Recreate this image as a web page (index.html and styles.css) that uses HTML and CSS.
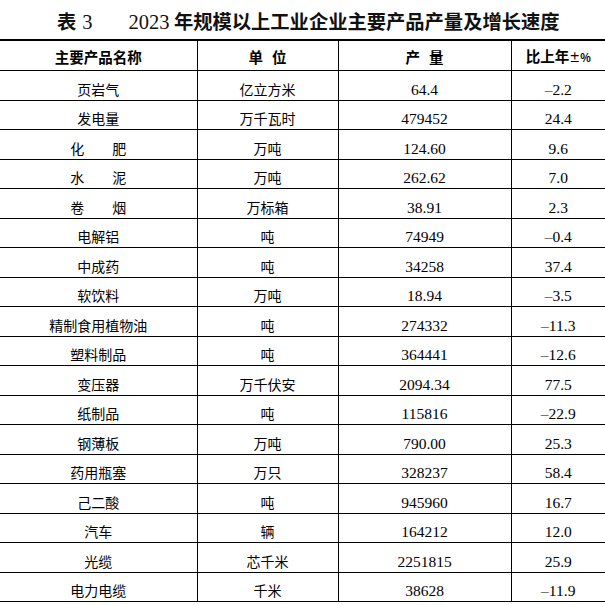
FILE: index.html
```html
<!DOCTYPE html>
<html lang="zh-CN">
<head>
<meta charset="utf-8">
<title>表 3 2023 年规模以上工业企业主要产品产量及增长速度</title>
<link rel="stylesheet" href="styles.css">
</head>
<body>
<h1 class="title"><span class="cn">表</span><span class="sp"></span><span class="num">3</span><span class="gap"></span><span class="num">2023</span> <span class="cn">年规模以上工业企业主要产品产量及增长速度</span></h1>
<table class="data">
  <colgroup>
    <col class="c1"><col class="c2"><col class="c3"><col class="c4">
  </colgroup>
  <thead>
    <tr><th>主要产品名称</th><th>单<span class="hsp"></span>位</th><th>产<span class="hsp"></span>量</th><th>比上年<span class="pm">±%</span></th></tr>
  </thead>
  <tbody>
    <tr><td>页岩气</td><td>亿立方米</td><td class="n">64.4</td><td class="n">–2.2</td></tr>
    <tr><td>发电量</td><td>万千瓦时</td><td class="n">479452</td><td class="n">24.4</td></tr>
    <tr><td>化　　肥</td><td>万吨</td><td class="n">124.60</td><td class="n">9.6</td></tr>
    <tr><td>水　　泥</td><td>万吨</td><td class="n">262.62</td><td class="n">7.0</td></tr>
    <tr><td>卷　　烟</td><td>万标箱</td><td class="n">38.91</td><td class="n">2.3</td></tr>
    <tr><td>电解铝</td><td>吨</td><td class="n">74949</td><td class="n">–0.4</td></tr>
    <tr><td>中成药</td><td>吨</td><td class="n">34258</td><td class="n">37.4</td></tr>
    <tr><td>软饮料</td><td>万吨</td><td class="n">18.94</td><td class="n">–3.5</td></tr>
    <tr><td>精制食用植物油</td><td>吨</td><td class="n">274332</td><td class="n">–11.3</td></tr>
    <tr><td>塑料制品</td><td>吨</td><td class="n">364441</td><td class="n">–12.6</td></tr>
    <tr><td>变压器</td><td>万千伏安</td><td class="n">2094.34</td><td class="n">77.5</td></tr>
    <tr><td>纸制品</td><td>吨</td><td class="n">115816</td><td class="n">–22.9</td></tr>
    <tr><td>钢薄板</td><td>万吨</td><td class="n">790.00</td><td class="n">25.3</td></tr>
    <tr><td>药用瓶塞</td><td>万只</td><td class="n">328237</td><td class="n">58.4</td></tr>
    <tr><td>己二酸</td><td>吨</td><td class="n">945960</td><td class="n">16.7</td></tr>
    <tr><td>汽车</td><td>辆</td><td class="n">164212</td><td class="n">12.0</td></tr>
    <tr><td>光缆</td><td>芯千米</td><td class="n">2251815</td><td class="n">25.9</td></tr>
    <tr><td>电力电缆</td><td>千米</td><td class="n">38628</td><td class="n">–11.9</td></tr>
  </tbody>
</table>
</body>
</html>
```

FILE: styles.css
```css
html, body {
  margin: 0;
  padding: 0;
  background: #fff;
  color: #000;
}

body {
  width: 605px;
  overflow: hidden;
  font-family: "Noto Sans CJK SC", sans-serif;
}

.title {
  margin: 0;
  height: 39px;
  box-sizing: border-box;
  padding: 9px 0 0 57px;
  font-size: 19.3px;
  line-height: 24px;
  font-weight: 700;
  white-space: nowrap;
  color: #111;
}

.title .cn {
  font-family: "Noto Sans CJK SC", sans-serif;
  font-weight: 700;
}

.title .num {
  font-family: "Liberation Serif", serif;
  font-weight: 400;
  font-size: 20.5px;
}

.title .sp {
  display: inline-block;
  width: 6px;
}

.title .gap {
  display: inline-block;
  width: 36px;
}

.data {
  width: 605px;
  table-layout: fixed;
  border-collapse: collapse;
  border-top: 2px solid #000;
  border-bottom: 1px solid #000;
}

.c1 { width: 197px; }
.c2 { width: 141px; }
.c3 { width: 173px; }
.c4 { width: 94px; }

.data th,
.data td {
  padding: 0 0 1px;
  text-align: center;
  vertical-align: bottom;
  border-left: 1px solid #000;
  border-bottom: 1px solid #000;
  white-space: nowrap;
}

.data th:first-child,
.data td:first-child {
  border-left: none;
}

.data th {
  height: 26px;
  font-size: 14.5px;
  line-height: 20px;
  font-weight: 700;
  padding-bottom: 3px;
}

.data th .hsp {
  display: inline-block;
  width: 9px;
}

.data th .pm {
  font-size: 11px;
}

.data td {
  height: 27.5px;
  font-size: 14px;
  line-height: 19px;
  font-weight: 400;
}

.data td.n {
  font-family: "Liberation Serif", serif;
  font-size: 15.5px;
}
```
